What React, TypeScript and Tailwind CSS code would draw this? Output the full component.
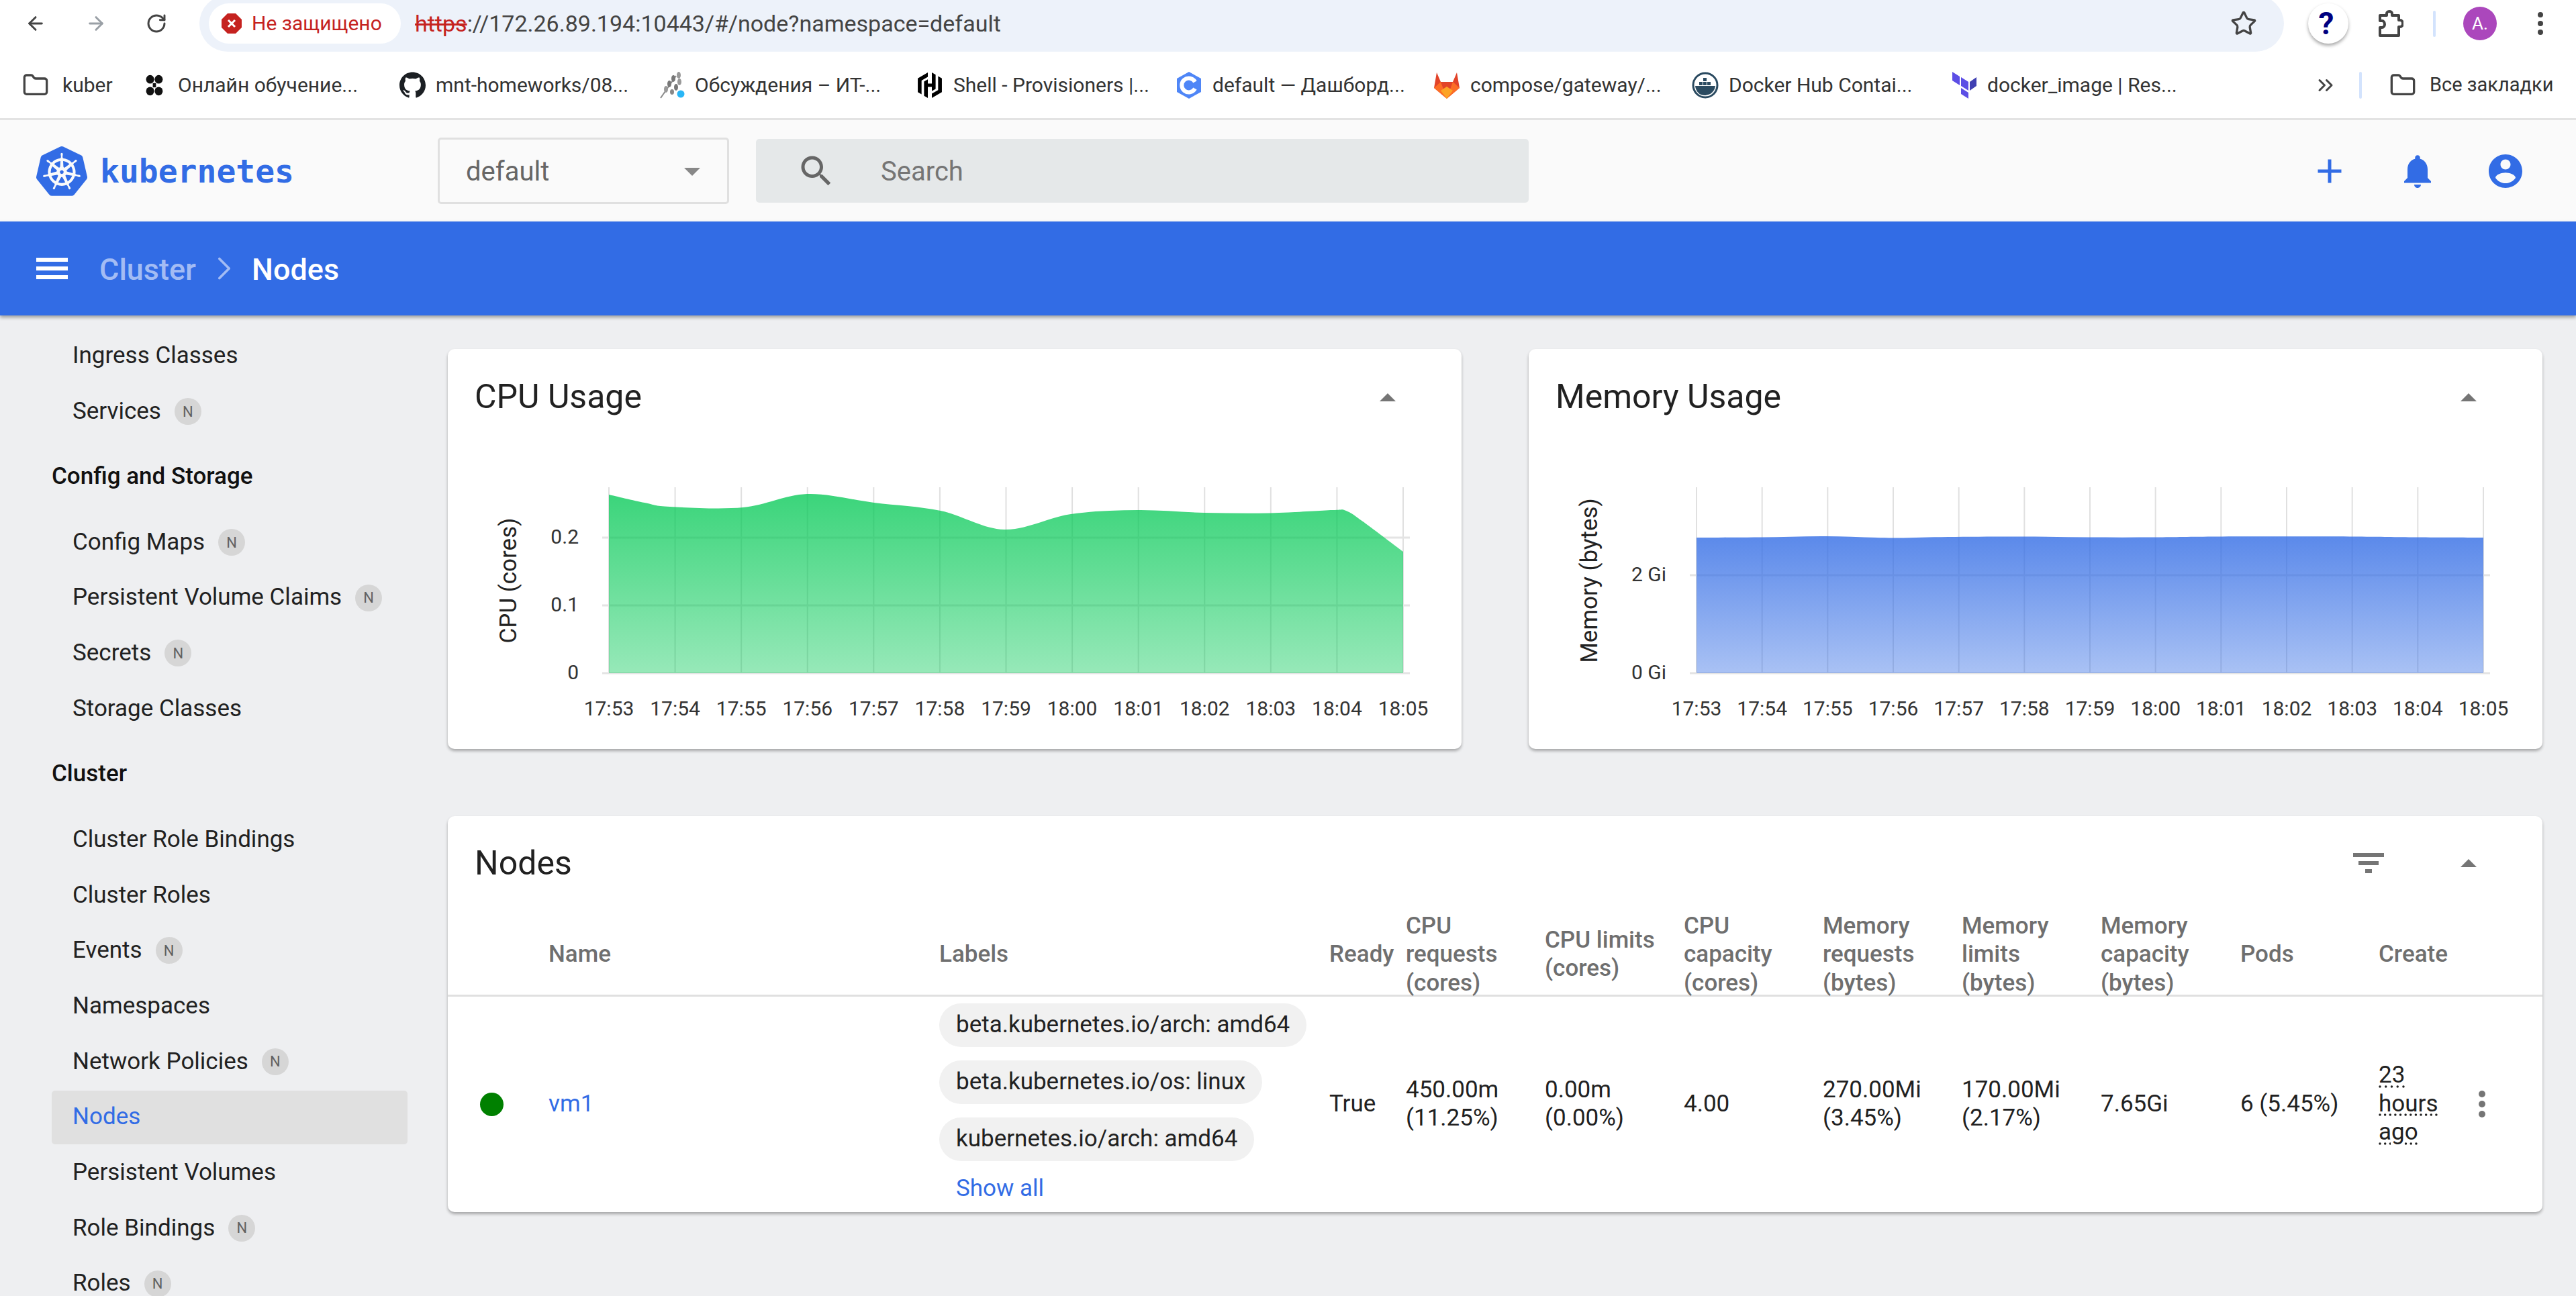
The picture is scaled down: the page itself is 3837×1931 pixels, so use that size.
import { ArrowLeft, ArrowRight, ChevronRight, ChevronsRight, Folder, RotateCw, Star } from 'lucide-react';
import { SiGithub, SiHashicorp, SiKubernetes } from 'react-icons/si';

const times = ['17:53', '17:54', '17:55', '17:56', '17:57', '17:58', '17:59', '18:00', '18:01', '18:02', '18:03', '18:04', '18:05'];

type Point = [number, number];

const cpuLine: Point[] = [
  [907, 737], [960, 749], [998, 755], [1107, 756], [1202, 736], [1302, 749], [1401, 761], [1496, 789],
  [1595, 766], [1695, 760], [1794, 764], [1892, 764.5], [1985, 760], [2005, 761], [2030, 777], [2090, 822],
];

const memoryLine: Point[] = [
  [2527, 801], [2623, 800.5], [2719, 799], [2820, 801.5], [2902, 800], [3010, 799.5], [3112, 800.5],
  [3210, 800.5], [3310, 799.5], [3500, 799.5], [3600, 800.5], [3699, 801],
];

// catmull-rom through the measured points
function smoothPath(points: Point[]) {
  let d = `M${points[0][0]} ${points[0][1]}`;
  for (let i = 0; i < points.length - 1; i++) {
    const p0 = points[Math.max(i - 1, 0)];
    const p1 = points[i];
    const p2 = points[i + 1];
    const p3 = points[Math.min(i + 2, points.length - 1)];
    d += ` C${p1[0] + (p2[0] - p0[0]) / 6} ${p1[1] + (p2[1] - p0[1]) / 6} ${p2[0] - (p3[0] - p1[0]) / 6} ${p2[1] - (p3[1] - p1[1]) / 6} ${p2[0]} ${p2[1]}`;
  }
  return d;
}

function MatIcon({ d, className }: { d: string; className: string }) {
  return (
    <svg viewBox="0 0 24 24" className={className} fill="currentColor">
      <path d={d} />
    </svg>
  );
}

function ClassCentralIcon() {
  return (
    <svg viewBox="0 0 32 40" className="h-[32px] w-[32px] shrink-0" fill="#111">
      <ellipse cx="8" cy="9" rx="7.5" ry="8" />
      <ellipse cx="24" cy="9" rx="7.5" ry="8" />
      <ellipse cx="8" cy="31" rx="7.5" ry="8" />
      <ellipse cx="24" cy="31" rx="7.5" ry="8" />
      <rect x="13" y="16" width="6" height="8" />
    </svg>
  );
}

function WheatIcon() {
  return (
    <svg viewBox="0 0 40 40" className="h-[40px] w-[40px] shrink-0">
      <path d="M3 39 L26 6" stroke="#888" strokeWidth="2" />
      <ellipse cx="30" cy="5" rx="3" ry="5" fill="#999" />
      <ellipse cx="22" cy="10" rx="3" ry="5" fill="#777" />
      <ellipse cx="31" cy="15" rx="3" ry="5" fill="#999" />
      <ellipse cx="16" cy="18" rx="3" ry="5" fill="#777" />
      <ellipse cx="26" cy="23" rx="3" ry="5" fill="#777" />
      <ellipse cx="11" cy="26" rx="3" ry="5" fill="#999" />
      <ellipse cx="20" cy="30" rx="3" ry="4" fill="#888" />
      <circle cx="33" cy="33" r="5.5" fill="#29b6f6" />
    </svg>
  );
}

function HexCIcon() {
  return (
    <svg viewBox="0 0 36 40" className="h-[40px] w-[36px] shrink-0">
      <path d="M18 0 L36 10 V30 L18 40 L0 30 V10 Z" fill="#4f86f7" />
      <path d="M27 15 A10.5 10.5 0 1 0 27 25" fill="none" stroke="#fff" strokeWidth="6" />
    </svg>
  );
}

function GitlabIcon() {
  return (
    <svg viewBox="0 0 40 40" className="h-[40px] w-[40px] shrink-0">
      <path d="M20 40 L1 24 L5 1 L11 15 H29 L35 1 L39 24 Z" fill="#e24329" />
      <path d="M1 24 L11 15 L20 40 Z M39 24 L29 15 L20 40 Z" fill="#fc6d26" />
      <path d="M11 28 L20 40 L29 28 L20 22 Z" fill="#fca326" />
    </svg>
  );
}

function DockerIcon() {
  return (
    <svg viewBox="0 0 40 40" className="h-[40px] w-[40px] shrink-0">
      <circle cx="20" cy="20" r="18" fill="#fff" stroke="#2a4a60" strokeWidth="3" />
      <path d="M5 21 H35 C34 30 27 35 19 35 C11 35 6 29 5 21 Z" fill="#2a4a60" />
      <path d="M11 15 H16 V20 H11 Z M17 15 H22 V20 H17 Z M23 15 H28 V20 H23 Z M17 9 H22 V14 H17 Z" fill="#2a4a60" />
    </svg>
  );
}

function TerraformIcon() {
  return (
    <svg viewBox="0 0 36 40" className="h-[40px] w-[36px] shrink-0">
      <path d="M0 0 L11 7 V20 L0 13 Z" fill="#5c4ee5" />
      <path d="M13 8 L24 15 V28 L13 21 Z" fill="#5c4ee5" />
      <path d="M13 24 L24 31 V40 L13 33 Z" fill="#5c4ee5" />
      <path d="M26 15 L36 8 V21 L26 28 Z" fill="#4040b2" />
    </svg>
  );
}

function ExtensionIcon() {
  return (
    <svg viewBox="0 0 38 40" className="ml-[44px] h-[40px] w-[38px] shrink-0" fill="none" stroke="#444" strokeWidth="4" strokeLinejoin="round">
      <path d="M3 8 H13 V5 A4 3 0 0 1 21 5 V8 H31 V15 H33 A4 5 0 0 1 33 25 H31 V38 H3 V26 H6 A4 5 0 0 0 6 16 H3 Z" />
    </svg>
  );
}

const folderIcon = <Folder className="h-[40px] w-[40px] shrink-0 text-[#444]" strokeWidth={2} />;

const bookmarks = [
  { icon: folderIcon, label: 'kuber', width: 'w-[181px]', gap: 'gap-[20px]' },
  { icon: <ClassCentralIcon />, label: 'Онлайн обучение...', width: 'w-[381px]', gap: 'gap-[19px]' },
  { icon: <SiGithub className="h-[39px] w-[39px] shrink-0 text-[#1b1f23]" />, label: 'mnt-homeworks/08...', width: 'w-[386px]', gap: 'gap-[15px]' },
  { icon: <WheatIcon />, label: 'Обсуждения – ИТ-...', width: 'w-[385px]', gap: 'gap-[14px]' },
  { icon: <SiHashicorp className="h-[38px] w-[38px] shrink-0 text-black" />, label: 'Shell - Provisioners |...', width: 'w-[387px]', gap: 'gap-[16px]' },
  { icon: <HexCIcon />, label: 'default — Дашборд...', width: 'w-[382px]', gap: 'gap-[17px]' },
  { icon: <GitlabIcon />, label: 'compose/gateway/...', width: 'w-[385px]', gap: 'gap-[15px]' },
  { icon: <DockerIcon />, label: 'Docker Hub Contai...', width: 'w-[388px]', gap: 'gap-[15px]' },
  { icon: <TerraformIcon />, label: 'docker_image | Res...', width: 'w-[538px]', gap: 'gap-[16px]' },
];

type NavItem = { label: string; section?: boolean; ns?: boolean; active?: boolean };

const navItems: NavItem[] = [
  { label: 'Ingress Classes' },
  { label: 'Services', ns: true },
  { label: 'Config and Storage', section: true },
  { label: 'Config Maps', ns: true },
  { label: 'Persistent Volume Claims', ns: true },
  { label: 'Secrets', ns: true },
  { label: 'Storage Classes' },
  { label: 'Cluster', section: true },
  { label: 'Cluster Role Bindings' },
  { label: 'Cluster Roles' },
  { label: 'Events', ns: true },
  { label: 'Namespaces' },
  { label: 'Network Policies', ns: true },
  { label: 'Nodes', active: true },
  { label: 'Persistent Volumes' },
  { label: 'Role Bindings', ns: true },
  { label: 'Roles', ns: true },
];

function Sidebar() {
  return (
    <nav className="w-[667px] shrink-0 pt-[19px]">
      {navItems.map((item) =>
        item.section ? (
          <div key={item.label} className="flex h-[112.3px] items-center pl-[77px] text-[35px] font-medium text-[#111]">
            {item.label}
          </div>
        ) : (
          <div key={item.label} className="flex h-[82.7px] items-center">
            <div
              className={`ml-[77px] flex h-[80px] w-[530px] items-center rounded-[5px] pl-[31px] text-[35px] ${
                item.active ? 'bg-[#e0e0e0] text-[#326ce5]' : 'text-[#212121]'
              }`}
            >
              {item.label}
              {item.ns && (
                <span className="ml-[20px] flex h-[40px] w-[40px] items-center justify-center rounded-full bg-[#d6d6d6] text-[22px] text-[#616161]">
                  N
                </span>
              )}
            </div>
          </div>
        ),
      )}
    </nav>
  );
}

function CollapseArrow() {
  return <div className="h-0 w-0 border-x-[12.5px] border-b-[12.5px] border-x-transparent border-b-[#757575]" />;
}

interface ChartProps {
  id: string;
  viewBox: string;
  color: string;
  topAlpha: number;
  bottomAlpha: number;
  line: Point[];
  xStart: number;
  xEnd: number;
  yTicks: { label: string; y: number }[];
  tickRight: number;
  axisLabel: string;
  axisX: number;
}

function UsageChart({ id, viewBox, color, topAlpha, bottomAlpha, line, xStart, xEnd, yTicks, tickRight, axisLabel, axisX }: ChartProps) {
  const step = (xEnd - xStart) / 12;
  const area = `${smoothPath(line)} L${xEnd} 1003 L${xStart} 1003 Z`;
  return (
    <svg viewBox={viewBox} className="block h-[452px] w-[1510px] font-['Roboto',sans-serif]">
      <defs>
        <linearGradient id={id} x1="0" y1="0" x2="0" y2="1">
          <stop offset="0" stopColor={color} stopOpacity={topAlpha} />
          <stop offset="1" stopColor={color} stopOpacity={bottomAlpha} />
        </linearGradient>
      </defs>
      {times.map((_, i) => (
        <line key={i} x1={xStart + step * i} x2={xStart + step * i} y1={726} y2={1003} stroke="#e0e0e0" strokeWidth={2} />
      ))}
      {yTicks.map((t) => (
        <line key={t.label} x1={xStart - 10} x2={xEnd + 10} y1={t.y} y2={t.y} stroke="#e4e4e4" strokeWidth={3} />
      ))}
      <path d={area} fill={`url(#${id})`} />
      {yTicks.map((t) => (
        <text key={t.label} x={tickRight} y={t.y + 9} textAnchor="end" className="fill-[#333] text-[30px]">
          {t.label}
        </text>
      ))}
      {times.map((t, i) => (
        <text key={t} x={xStart + step * i} y={1066} textAnchor="middle" className="fill-[#333] text-[30px]">
          {t}
        </text>
      ))}
      <text
        x={axisX}
        y={865}
        textAnchor="middle"
        dominantBaseline="central"
        transform={`rotate(-90 ${axisX} 865)`}
        className="fill-[#222] text-[35px]"
      >
        {axisLabel}
      </text>
    </svg>
  );
}

function ChartCard({ title, children }: { title: string; children: React.ReactNode }) {
  return (
    <div className="h-[596px] w-[1510px] rounded-[10px] bg-white shadow-[0_3px_4px_rgba(0,0,0,0.3)]">
      <div className="flex h-[144px] items-center justify-between pl-[40px] pr-[98px]">
        <span className="-mt-[2px] text-[50px] text-[#212121]">{title}</span>
        <CollapseArrow />
      </div>
      {children}
    </div>
  );
}

const tableColumns = 'grid grid-cols-[150px_582px_581px_114px_207px_207px_207px_207px_207px_208px_206px_244px]';

const headers = [
  '',
  'Name',
  'Labels',
  'Ready',
  'CPU requests (cores)',
  'CPU limits (cores)',
  'CPU capacity (cores)',
  'Memory requests (bytes)',
  'Memory limits (bytes)',
  'Memory capacity (bytes)',
  'Pods',
  'Create',
];

const chips = ['beta.kubernetes.io/arch: amd64', 'beta.kubernetes.io/os: linux', 'kubernetes.io/arch: amd64'];

function Cell({ lines }: { lines: string[] }) {
  return (
    <div className="flex flex-col justify-center text-[35px] leading-[42.5px] text-[#212121]">
      {lines.map((line) => (
        <span key={line}>{line}</span>
      ))}
    </div>
  );
}

function NodesCard() {
  return (
    <div className="mt-[99.5px] h-[590px] w-[3120px] rounded-[10px] bg-white shadow-[0_3px_4px_rgba(0,0,0,0.3)]">
      <div className="flex h-[143px] items-center pb-[2px] pl-[40px] pr-[98px]">
        <span className="flex-1 text-[50px] text-[#212121]">Nodes</span>
        <div className="mr-[114px] flex flex-col items-center gap-[6px]">
          <div className="h-[6px] w-[46px] bg-[#757575]" />
          <div className="h-[6px] w-[30px] bg-[#757575]" />
          <div className="h-[6px] w-[10px] bg-[#757575]" />
        </div>
        <CollapseArrow />
      </div>
      <div className={`${tableColumns} h-[126px] items-center border-b-[3px] border-[#e0e0e0] text-[35px] font-medium leading-[42.5px] text-[#6f6f6f]`}>
        {headers.map((h, i) => (
          <div key={i} className="pr-[10px]">
            {h}
          </div>
        ))}
      </div>
      <div className={`${tableColumns} h-[321px]`}>
        <div className="flex items-center pl-[48px]">
          <div className="h-[35px] w-[35px] rounded-full bg-[#008000]" />
        </div>
        <div className="flex items-center text-[35px] text-[#326ce5]">vm1</div>
        <div className="flex flex-col items-start gap-[20px] pt-[10px]">
          {chips.map((chip) => (
            <span key={chip} className="flex h-[65px] items-center rounded-full bg-[#f1f1f1] px-[25px] text-[35px] text-[#212121]">
              {chip}
            </span>
          ))}
          <span className="pl-[25px] text-[35px] leading-[42px] text-[#326ce5]">Show all</span>
        </div>
        <Cell lines={['True']} />
        <Cell lines={['450.00m', '(11.25%)']} />
        <Cell lines={['0.00m', '(0.00%)']} />
        <Cell lines={['4.00']} />
        <Cell lines={['270.00Mi', '(3.45%)']} />
        <Cell lines={['170.00Mi', '(2.17%)']} />
        <Cell lines={['7.65Gi']} />
        <Cell lines={['6 (5.45%)']} />
        <div className="flex items-center">
          <span className="w-[124px] text-[35px] leading-[42.5px] text-[#212121] underline decoration-dotted underline-offset-[4px]">23 hours ago</span>
          <div className="flex w-[60px] flex-col items-center gap-[5px]">
            <div className="h-[10px] w-[10px] rounded-full bg-[#757575]" />
            <div className="h-[10px] w-[10px] rounded-full bg-[#757575]" />
            <div className="h-[10px] w-[10px] rounded-full bg-[#757575]" />
          </div>
        </div>
      </div>
    </div>
  );
}

export default function App() {
  return (
    <div className="flex h-[1931px] w-[3837px] flex-col overflow-hidden bg-[#eeeff1] font-['Roboto',sans-serif]">
      {/* browser chrome */}
      <div className="flex h-[77px] shrink-0 items-start bg-white pl-[37px]">
        <div className="flex h-[70px] items-center gap-[58px] text-[#444]">
          <ArrowLeft className="h-[32px] w-[32px]" strokeWidth={2.2} />
          <ArrowRight className="h-[32px] w-[32px] text-[#9aa0a6]" strokeWidth={2.2} />
          <RotateCw className="h-[32px] w-[32px]" strokeWidth={2.2} />
        </div>
        <div className="-mt-[7px] ml-[48px] flex h-[84px] w-[3105px] items-center rounded-full bg-[#edf2fa] pl-[14px] pr-[40px]">
          <div className="mt-[-1px] flex h-[60px] w-[286px] items-center rounded-full bg-white pl-[19px]">
            <svg viewBox="0 0 30 30" className="h-[30px] w-[30px] shrink-0">
              <path d="M9 0 H21 L30 9 V21 L21 30 H9 L0 21 V9 Z" fill="#c5221f" />
              <path d="M10 10 L20 20 M20 10 L10 20" stroke="#fff" strokeWidth="3" />
            </svg>
            <span className="ml-[15px] text-[30px] text-[#c5221f]">Не защищено</span>
          </div>
          <span className="ml-[21px] flex-1 text-[34px] text-[#444]">
            <span className="text-[#c5221f] line-through">https</span>://172.26.89.194:10443/#/node?namespace=default
          </span>
          <Star className="h-[40px] w-[40px] text-[#444]" strokeWidth={2} />
        </div>
        <div className="flex h-[70px] items-center">
          <div className="ml-[36px] flex h-[60px] w-[60px] items-center justify-center rounded-full bg-white pr-[6px] text-[46px] font-bold text-[#000080] shadow-[0_3px_5px_rgba(0,0,0,0.35)]">
            ?
          </div>
          <ExtensionIcon />
          <div className="ml-[44px] h-[39px] w-[4px] rounded-full bg-[#d3e3fd]" />
          <div className="ml-[41px] flex h-[50px] w-[50px] items-center justify-center rounded-full bg-[#ab47bc] text-[26px] text-white">
            A.
          </div>
          <div className="ml-[61px] flex flex-col gap-[5px]">
            <div className="h-[8px] w-[8px] rounded-full bg-[#444]" />
            <div className="h-[8px] w-[8px] rounded-full bg-[#444]" />
            <div className="h-[8px] w-[8px] rounded-full bg-[#444]" />
          </div>
        </div>
      </div>
      {/* bookmarks */}
      <div className="flex h-[102px] shrink-0 items-center border-b-[3px] border-[#e3e3e3] bg-white pl-[33px] text-[30px] text-[#333]">
        {bookmarks.map((b) => (
          <div key={b.label} className={`flex shrink-0 items-center ${b.width} ${b.gap}`}>
            {b.icon}
            <span className="whitespace-nowrap">{b.label}</span>
          </div>
        ))}
        <ChevronsRight className="h-[36px] w-[36px] shrink-0 text-[#444]" strokeWidth={2} />
        <div className="ml-[32px] h-[40px] w-[4px] rounded-full bg-[#d3e3fd]" />
        <div className="ml-[41px] flex shrink-0 items-center gap-[20px]">
          {folderIcon}
          <span className="text-[29px]">Все закладки</span>
        </div>
      </div>
      {/* kubernetes toolbar */}
      <div className="flex h-[151px] shrink-0 items-center bg-[#fafafa]">
        <SiKubernetes className="ml-[54px] h-[76px] w-[76px] shrink-0 text-[#326ce5]" />
        <span className="ml-[19px] w-[503px] font-['DejaVu_Sans_Mono',monospace] text-[48px] font-bold text-[#326ce5]">kubernetes</span>
        <div className="flex h-[99px] w-[434px] items-center justify-between rounded-[5px] border-[3px] border-[#e0e0e0] pl-[39px] pr-[40px] pt-[2px] text-[40px] text-[#666]">
          default
          <div className="h-0 w-0 border-x-[12px] border-t-[12px] border-x-transparent border-t-[#888]" />
        </div>
        <div className="ml-[40px] flex h-[95px] w-[1151px] items-center rounded-[5px] bg-[#e5e8e9] pl-[60px] text-[40px] text-[#757575]">
          <MatIcon
            className="h-[60px] w-[60px] text-[#666]"
            d="M15.5 14h-.79l-.28-.27C15.41 12.59 16 11.11 16 9.5 16 5.91 13.09 3 9.5 3S3 5.91 3 9.5 5.91 16 9.5 16c1.61 0 3.09-.59 4.23-1.57l.27.28v.79l5 4.99L20.49 19l-4.99-5zm-6 0C7.01 14 5 11.99 5 9.5S7.01 5 9.5 5 14 7.01 14 9.5 11.99 14 9.5 14z"
          />
          <span className="ml-[66px] pt-[2px]">Search</span>
        </div>
        <div className="ml-auto flex items-center gap-[71px] pr-[75px] text-[#326ce5]">
          <MatIcon className="h-[60px] w-[60px]" d="M19 13h-6v6h-2v-6H5v-2h6V5h2v6h6v2z" />
          <MatIcon
            className="h-[60px] w-[60px]"
            d="M12 22c1.1 0 2-.9 2-2h-4c0 1.1.89 2 2 2zm6-6v-5c0-3.07-1.64-5.64-4.5-6.32V4c0-.83-.67-1.5-1.5-1.5s-1.5.67-1.5 1.5v.68C7.63 5.36 6 7.92 6 11v5l-2 2v1h16v-1l-2-2z"
          />
          <MatIcon
            className="h-[60px] w-[60px]"
            d="M12 2C6.48 2 2 6.48 2 12s4.48 10 10 10 10-4.48 10-10S17.52 2 12 2zm0 3c1.66 0 3 1.34 3 3s-1.34 3-3 3-3-1.34-3-3 1.34-3 3-3zm0 14.2c-2.5 0-4.71-1.28-6-3.22.03-1.99 4-3.08 6-3.08 1.99 0 5.97 1.09 6 3.08-1.29 1.94-3.5 3.22-6 3.22z"
          />
        </div>
      </div>
      {/* breadcrumb bar */}
      <div className="relative z-10 flex h-[140px] shrink-0 items-center bg-[#326ce5] pl-[54px] text-[45px] shadow-[0_3px_5px_rgba(0,0,0,0.35)]">
        <div className="flex w-[47px] flex-col gap-[7px]">
          <div className="h-[6px] bg-white" />
          <div className="h-[6px] bg-white" />
          <div className="h-[6px] bg-white" />
        </div>
        <span className="ml-[47px] pt-[4px] font-medium text-[#a3bcf4]">Cluster</span>
        <ChevronRight className="ml-[13px] h-[58px] w-[58px] text-[#a3bcf4]" strokeWidth={1.5} />
        <span className="ml-[12px] pt-[4px] font-medium text-white">Nodes</span>
      </div>
      {/* page */}
      <div className="flex min-h-0 flex-1">
        <Sidebar />
        <main className="pt-[50px]">
          <div className="flex gap-[100px]">
            <ChartCard title="CPU Usage">
              <UsageChart
                id="cpu-fill"
                viewBox="667 664 1510 452"
                color="#00c853"
                topAlpha={0.77}
                bottomAlpha={0.41}
                line={cpuLine}
                xStart={907}
                xEnd={2090}
                yTicks={[
                  { label: '0.2', y: 801 },
                  { label: '0.1', y: 902 },
                  { label: '0', y: 1003 },
                ]}
                tickRight={862}
                axisLabel="CPU (cores)"
                axisX={757}
              />
            </ChartCard>
            <ChartCard title="Memory Usage">
              <UsageChart
                id="memory-fill"
                viewBox="2277 664 1510 452"
                color="#326ce5"
                topAlpha={0.8}
                bottomAlpha={0.42}
                line={memoryLine}
                xStart={2527}
                xEnd={3699}
                yTicks={[
                  { label: '2 Gi', y: 857 },
                  { label: '0 Gi', y: 1003 },
                ]}
                tickRight={2482}
                axisLabel="Memory (bytes)"
                axisX={2367}
              />
            </ChartCard>
          </div>
          <NodesCard />
        </main>
      </div>
    </div>
  );
}
